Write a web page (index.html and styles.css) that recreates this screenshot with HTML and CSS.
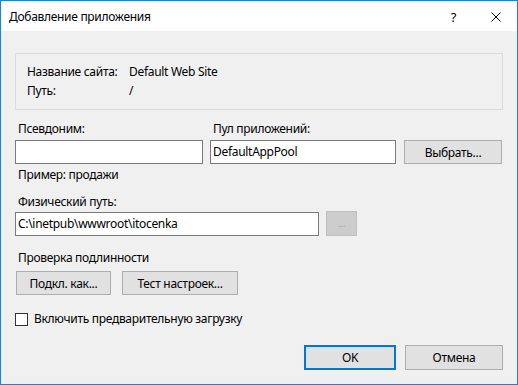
FILE: index.html
```html
<!DOCTYPE html>
<html lang="ru">
<head>
<meta charset="utf-8">
<title>Добавление приложения</title>
<link rel="stylesheet" href="styles.css">
</head>
<body>
<div class="window">
  <div class="titlebar">
    <span class="title">Добавление приложения</span>
    <span class="help">?</span>
    <svg class="close" width="10" height="10" viewBox="0 0 10 10"><path d="M0.5 0.5 L9.5 9.5 M9.5 0.5 L0.5 9.5" stroke="#000" stroke-width="1" fill="none"/></svg>
  </div>
  <div class="content">
    <div class="group">
      <div class="info-row"><span class="key">Название сайта:</span><span>Default Web Site</span></div>
      <div class="info-row"><span class="key">Путь:</span><span>/</span></div>
    </div>

    <div class="row2">
      <div class="col-alias">
        <div class="label">Псевдоним:</div>
        <div class="input"></div>
      </div>
      <div class="col-pool">
        <div class="label">Пул приложений:</div>
        <div class="input">DefaultAppPool</div>
      </div>
      <div class="col-btn">
        <button class="btn btn-select">Выбрать...</button>
      </div>
    </div>
    <div class="label hint">Пример: продажи</div>

    <div class="label sec">Физический путь:</div>
    <div class="path-row">
      <div class="input path">C:\inetpub\wwwroot\itocenka</div>
      <button class="btn btn-dots" disabled>...</button>
    </div>

    <div class="label sec2">Проверка подлинности</div>
    <div class="auth-row">
      <button class="btn btn-connect">Подкл. как...</button>
      <button class="btn btn-test">Тест настроек...</button>
    </div>

    <label class="check-row"><span class="checkbox"></span><span>Включить предварительную загрузку</span></label>

    <div class="footer">
      <button class="btn btn-ok">OK</button>
      <button class="btn btn-cancel">Отмена</button>
    </div>
  </div>
</div>
</body>
</html>
```
FILE: styles.css
```css
* { box-sizing: border-box; }
html, body { margin: 0; padding: 0; }
body {
  font-family: "Noto Sans", "Liberation Sans", sans-serif;
  font-size: 12px;
  letter-spacing: -0.3px;
  color: #000;
  background: #fff;
}
.window {
  width: 518px;
  height: 385px;
  border: 1px solid #1883d7;
  display: flex;
  flex-direction: column;
  overflow: hidden;
}
.titlebar {
  height: 30px;
  background: #fff;
  display: flex;
  align-items: center;
  padding-left: 8px;
  flex: none;
}
.title { font-size: 12px; line-height: 16px; margin-top: 2px; }
.help { margin-left: auto; font-size: 13px; line-height: 16px; margin-right: 35px; margin-top: 1px; }
.close { margin-right: 16px; margin-top: 1px; }
.content {
  flex: 1;
  background: #f0f0f0;
  padding: 22px 14px 0 14px;
}
.group {
  height: 57px;
  border: 1px solid #dcdcdc;
  padding: 8px 0 0 11px;
}
.info-row { display: flex; line-height: 19px; height: 19px; }
.key { width: 102px; }
.label { line-height: 16px; height: 16px; padding-left: 3px; }
.row2 { display: flex; margin-top: 11px; }
.col-alias { width: 188px; }
.col-pool { width: 186px; margin-left: 7px; }
.col-btn { margin-left: 8px; display: flex; align-items: flex-end; }
.input {
  margin-top: 3px;
  height: 24px;
  border: 1px solid #7a7a7a;
  background: #fff;
  line-height: 22px;
  padding-left: 2px;
  white-space: nowrap;
}
.btn {
  font-family: inherit;
  font-size: 12px;
  letter-spacing: -0.3px;
  color: #000;
  background: #e1e1e1;
  border: 1px solid #adadad;
  height: 24px;
  padding: 0;
  margin: 0;
}
.btn-select { width: 98px; }
.hint { margin-top: 3px; }
.sec { margin-top: 11px; }
.path-row { display: flex; align-items: flex-end; }
.path { width: 304px; margin-top: 2px; }
.btn-dots {
  width: 31px;
  height: 25px;
  margin-left: 7px;
  background: #cccccc;
  border-color: #bfbfbf;
  color: #a0a0a0;
  font-size: 9px;
  letter-spacing: 0;
}
.sec2 { margin-top: 14px; }
.auth-row { display: flex; gap: 11px; margin-top: 5px; padding-left: 1px; }
.btn-connect { width: 95px; }
.btn-test { width: 116px; }
.check-row {
  display: flex;
  align-items: center;
  margin-top: 16px;
  height: 16px;
  line-height: 16px;
}
.checkbox {
  width: 13px;
  height: 13px;
  border: 1px solid #333;
  background: #fff;
  margin-right: 6px;
}
.footer {
  display: flex;
  justify-content: flex-end;
  gap: 9px;
  margin-top: 18px;
}
.btn-ok { width: 92px; height: 25px; border: 2px solid #0078d7; }
.btn-cancel { width: 98px; height: 25px; }
```
